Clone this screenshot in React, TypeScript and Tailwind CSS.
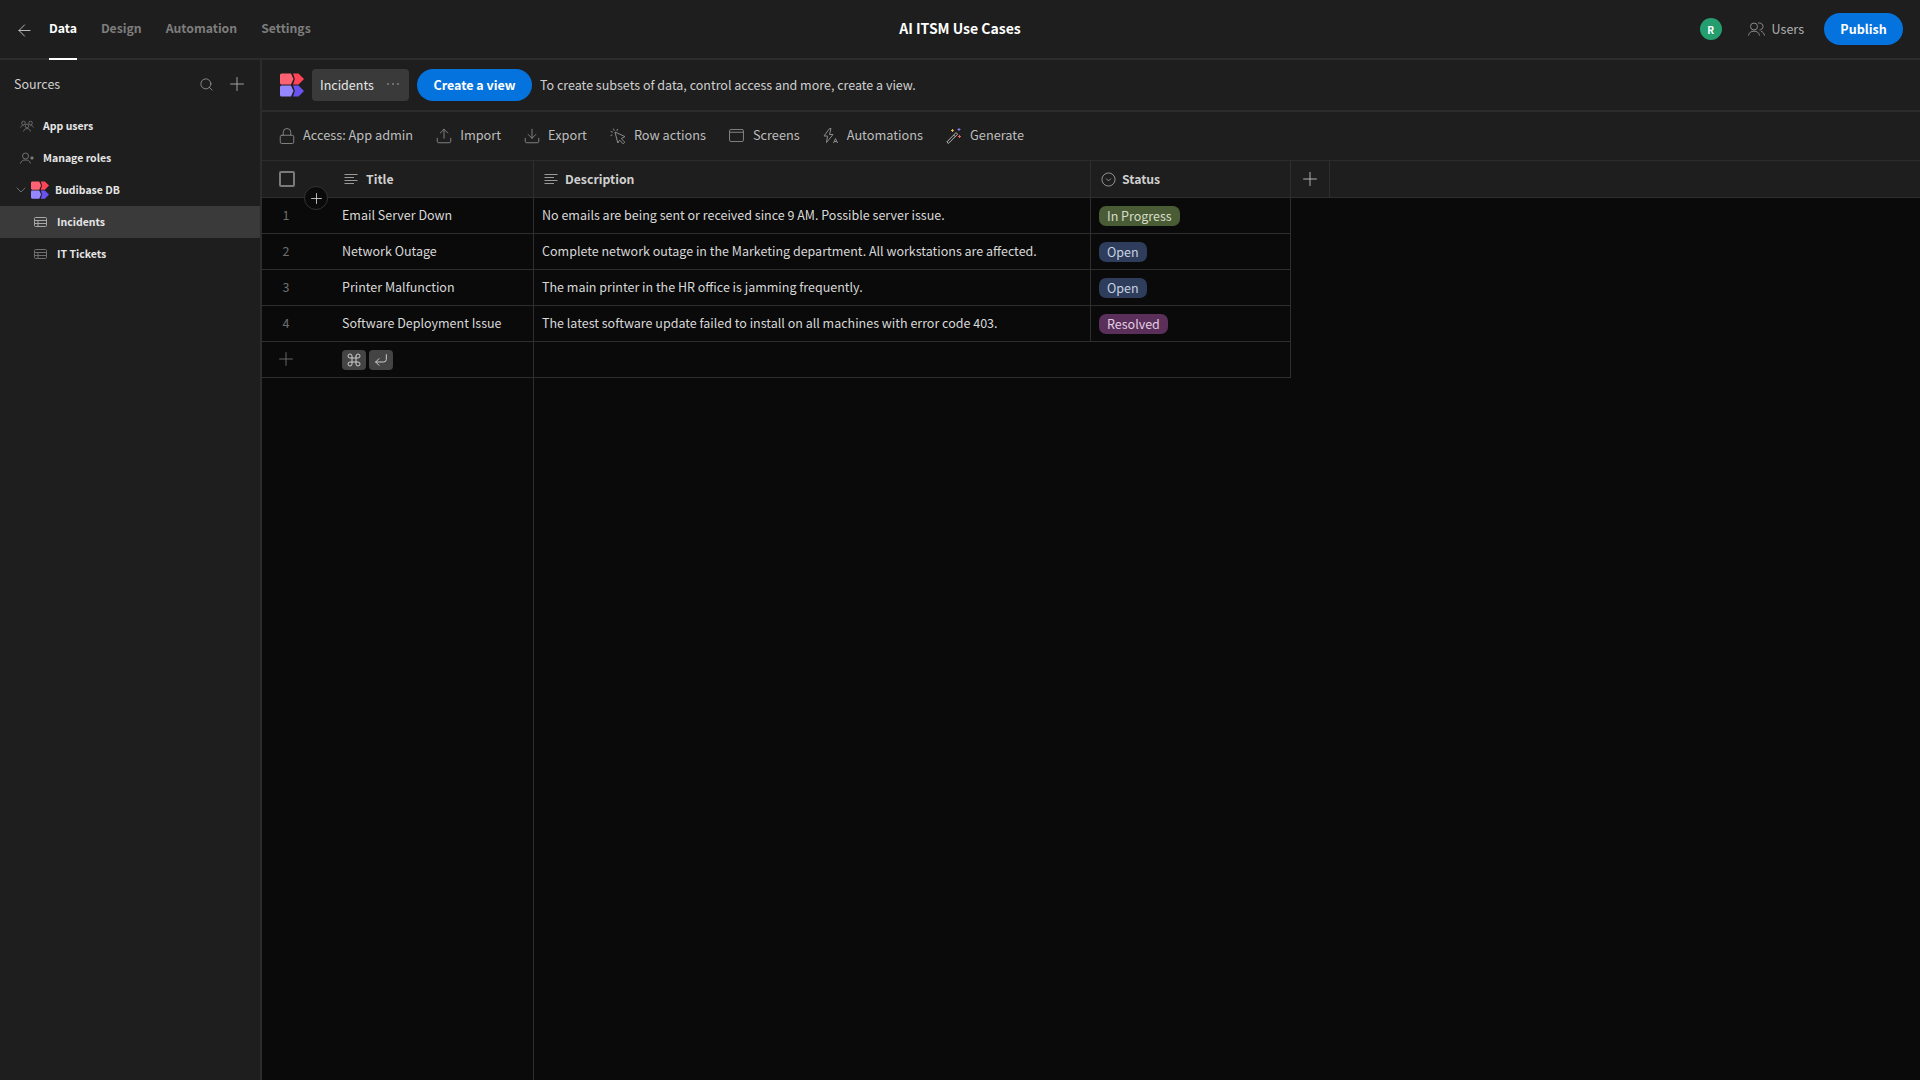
import { ArrowLeft, ChevronDown, Command, CornerDownLeft, Plus, Search, Upload, Download, Lock } from "lucide-react";

const font = "font-['Noto_Sans_CJK_SC','Source_Sans_Pro','Noto_Sans',sans-serif]";

function Logo({ className }: { className: string }) {
	return (
		<svg viewBox="0 0 24 24" className={className}>
			<path d="M0 2 Q0 0.5 1.5 0.5 H11 L13.5 6 L11 11.5 H1.5 Q0 11.5 0 10 Z" fill="#ff6272" />
			<path d="M13 0.5 H18.5 L24 6 L18.5 11.5 H13 L14.8 6 Z" fill="#ff4457" />
			<path d="M0 14 Q0 12.5 1.5 12.5 H11 L13.5 18 L11 23.5 H1.5 Q0 23.5 0 22 Z" fill="#9487ff" />
			<path d="M13 12.5 H18.5 L24 18 L18.5 23.5 H13 L14.8 18 Z" fill="#6a52ef" />
		</svg>
	);
}

function LinesIcon() {
	return (
		<svg viewBox="0 0 14 12" className="w-[14px] h-[12px] shrink-0" stroke="#9a9a9a" strokeWidth="1">
			<path d="M0.5 1.5H13.5M0.5 4.5H10M0.5 7.5H13.5M0.5 10.5H10" />
		</svg>
	);
}

function TableIcon({ color }: { color: string }) {
	return (
		<svg viewBox="0 0 13 10" className="w-[13px] h-[10px] shrink-0" fill="none" stroke={color} strokeWidth="1">
			<rect x="0.5" y="0.5" width="12" height="9" rx="1" />
			<path d="M0.5 3.5H12.5M0.5 6.5H12.5M4 3.5V9.5" />
		</svg>
	);
}

function AppUsersIcon() {
	return (
		<svg viewBox="0 0 14 12" className="w-[14px] h-[12px] shrink-0" fill="none" stroke="#7a7a7a" strokeWidth="0.8">
			<circle cx="3.5" cy="3" r="1.8" />
			<circle cx="10.5" cy="3" r="1.8" />
			<circle cx="7" cy="6" r="1.8" />
			<path d="M0.5 7.5C1 6 2 5.6 3.5 5.6M13.5 7.5C13 6 12 5.6 10.5 5.6M3.5 11.5C4 9.2 5.5 8.6 7 8.6C8.5 8.6 10 9.2 10.5 11.5" />
		</svg>
	);
}

function RolesIcon() {
	return (
		<svg viewBox="0 0 14 12" className="w-[14px] h-[12px] shrink-0" fill="none" stroke="#7a7a7a" strokeWidth="0.9">
			<circle cx="5.5" cy="4" r="3" />
			<path d="M0.5 11.5C1 8.8 3 8 5.5 8C8 8 9.8 8.8 10.4 11.5" />
			<circle cx="12" cy="6" r="1.2" fill="#7a7a7a" />
		</svg>
	);
}

function TopUsersIcon() {
	return (
		<svg viewBox="0 0 17 14" className="w-[17px] h-[14px] shrink-0 mr-[7px]" fill="none" stroke="#8a8a8a" strokeWidth="1">
			<circle cx="6" cy="4.5" r="3.5" />
			<path d="M0.5 13.5C1 10.5 3 9.2 6 9.2C9 9.2 11 10.5 11.5 13.5" />
			<path d="M10 1.2C10.5 1 11 1 11.5 1C13.4 1 15 2.5 15 4.5C15 6.5 13.4 8 11.5 8M13 9.4C15 9.9 16 11.2 16.5 13.5" />
		</svg>
	);
}

function CursorIcon() {
	return (
		<svg viewBox="0 0 16 16" className="w-[16px] h-[16px] shrink-0" fill="none" stroke="#8a8a8a" strokeWidth="1" strokeLinejoin="round">
			<path d="M5 4L15 8.6L11.2 10.6L14.8 14.2L13.2 15.8L9.6 12.2L7.8 15Z" />
			<path d="M3.4 0.6L4.3 2.8M0.6 3.4L2.8 4.3M7.6 1L6.9 2.8M0.6 7.6L2.4 6.9" />
		</svg>
	);
}

function ScreensIcon() {
	return (
		<svg viewBox="0 0 16 14" className="w-[15px] h-[13px] shrink-0" fill="none" stroke="#8a8a8a" strokeWidth="1">
			<rect x="0.5" y="0.5" width="15" height="13" rx="1.5" />
			<path d="M0.5 3.5H15.5" />
		</svg>
	);
}

function AutomationsIcon() {
	return (
		<svg viewBox="0 0 16 16" className="w-[16px] h-[16px] shrink-0" fill="none" stroke="#8a8a8a" strokeWidth="1">
			<path d="M6.5 0.5L1 8H4.5L3.5 14.5L10 6.5H6.5L8 0.5Z" />
			<path d="M10.5 15L12.5 10.5L14.5 15M11.2 13.5H13.8" />
		</svg>
	);
}

function WandIcon() {
	return (
		<svg viewBox="0 0 16 16" className="w-[16px] h-[16px] shrink-0" fill="none">
			<path d="M0.8 14L10 4.6L11.6 6.2L2.4 15.4Z" stroke="#b5b5b5" strokeWidth="1" />
			<path d="M7.6 7L9.2 8.6" stroke="#b5b5b5" strokeWidth="1" />
			<path d="M6.5 1V4M5 2.5H8" stroke="#e0b64a" strokeWidth="1" />
			<path d="M13 0V3M11.5 1.5H14.5" stroke="#7d7df0" strokeWidth="1" />
			<path d="M13.5 7V10M12 8.5H15" stroke="#e8605a" strokeWidth="1" />
		</svg>
	);
}

function StatusIcon() {
	return (
		<svg viewBox="0 0 16 16" className="w-[15px] h-[15px] shrink-0" fill="none" stroke="#9a9a9a" strokeWidth="1">
			<circle cx="8" cy="8" r="7" />
			<path d="M5.5 7L8 9.5L10.5 7" />
		</svg>
	);
}

function ToolbarButton({ icon, label }: { icon: React.ReactNode; label: string }) {
	return (
		<div className="flex items-center gap-[7px] text-[12.75px] text-[#bdbdbd] pb-px">
			<span className="w-[18px] flex items-center justify-center">{icon}</span>
			<span className="pb-px">{label}</span>
		</div>
	);
}

function SideItem({ icon, label, active, pad }: { icon: React.ReactNode; label: string; active?: boolean; pad: string }) {
	return (
		<div className={`flex items-center h-8 text-[10.5px] font-semibold text-[#e6e6e6] ${pad} ${active ? "bg-[#3a3a3a]" : ""}`}>
			{icon}
			<span>{label}</span>
		</div>
	);
}

const rows = [
	{ title: "Email Server Down", desc: "No emails are being sent or received since 9 AM. Possible server issue.", status: "In Progress", pill: "bg-[#4a5c36] text-[#d6dcc6]" },
	{ title: "Network Outage", desc: "Complete network outage in the Marketing department. All workstations are affected.", status: "Open", pill: "bg-[#2e3d5c] text-[#c9d2e2]" },
	{ title: "Printer Malfunction", desc: "The main printer in the HR office is jamming frequently.", status: "Open", pill: "bg-[#2e3d5c] text-[#c9d2e2]" },
	{ title: "Software Deployment Issue", desc: "The latest software update failed to install on all machines with error code 403.", status: "Resolved", pill: "bg-[#5a2f5a] text-[#e2cde2]" },
];

export default function App() {
	return (
		<div className={`w-[1920px] h-[1080px] flex flex-col overflow-hidden bg-[#1e1e1e] text-[#e0e0e0] ${font}`}>
			{/* top nav */}
			<div className="h-[60px] shrink-0 flex items-center border-b-2 border-[#2c2c2c] relative">
				<div className="flex-1 flex items-center h-full pl-[15px]">
					<ArrowLeft className="w-[19px] h-[19px] mr-[15px] mt-[2px] text-[#bbbbbb]" strokeWidth={1.25} />
					<div className="flex gap-6 h-full text-[12.25px] font-semibold text-[#7d7d7d]">
						<div className="relative h-full flex items-center text-white pb-[2px]">
							Data
							<div className="absolute -bottom-[2px] left-0 right-0 h-[2px] bg-white" />
						</div>
						<div className="flex items-center pb-[2px]">Design</div>
						<div className="flex items-center pb-[2px]">Automation</div>
						<div className="flex items-center pb-[2px]">Settings</div>
					</div>
				</div>
				<div className="text-[14px] font-semibold text-white pb-[2px] pl-[2px]">AI ITSM Use Cases</div>
				<div className="flex-1 flex items-center justify-end pr-[17px]">
					<div className="w-[22px] h-[22px] rounded-full bg-[#259e6f] text-white text-[10px] font-bold flex items-center justify-center mr-[26px]">R</div>
					<TopUsersIcon />
					<div className="text-[12.5px] text-[#b0b0b0] mr-[20px]">Users</div>
					<div className="w-[79px] h-8 rounded-full bg-[#0573de] text-white text-[12.5px] font-semibold flex items-center justify-center">Publish</div>
				</div>
			</div>

			<div className="flex flex-1 min-h-0">
				{/* sidebar */}
				<div className="w-[262px] shrink-0 border-r-2 border-[#2c2c2c]">
					<div className="h-[50px] flex items-center pl-[14px] pr-[12px] pb-[2px] text-[12.5px] text-[#d0d0d0]">
						<span className="flex-1">Sources</span>
						<Search className="w-[15px] h-[15px] text-[#a0a0a0] mr-[12px]" strokeWidth={1.25} />
						<Plus className="w-[22px] h-[22px] text-[#a0a0a0]" strokeWidth={1.1} />
					</div>
					<SideItem pad="pl-[20px]" label="App users" icon={<span className="mr-[9px]"><AppUsersIcon /></span>} />
					<SideItem pad="pl-[20px]" label="Manage roles" icon={<span className="mr-[9px]"><RolesIcon /></span>} />
					<SideItem
						pad="pl-[13px]"
						label="Budibase DB"
						icon={
							<>
								<ChevronDown className="w-[16px] h-[16px] text-[#8a8a8a] mr-[2px]" strokeWidth={1.1} />
								<Logo className="w-[18px] h-[18px] mr-[6px]" />
							</>
						}
					/>
					<SideItem active pad="pl-[34px]" label="Incidents" icon={<span className="mr-[10px]"><TableIcon color="#a8a8a8" /></span>} />
					<SideItem pad="pl-[34px]" label="IT Tickets" icon={<span className="mr-[10px]"><TableIcon color="#6f6f6f" /></span>} />
				</div>

				{/* main */}
				<div className="flex-1 min-w-0 flex flex-col">
					<div className="h-[52px] shrink-0 flex items-center pl-[18px] border-b-2 border-[#2c2c2c]">
						<Logo className="w-[24px] h-[24px] mr-[8px]" />
						<div className="w-[97px] h-8 rounded bg-[#3a3a3a] flex items-center pl-2 text-[12.5px] text-[#e6e6e6] mr-2">
							<span className="flex-1">Incidents</span>
							<div className="flex gap-[3px] mr-[10px] mb-[2px]">
								<div className="w-[2px] h-[2px] rounded-full bg-[#808080]" />
								<div className="w-[2px] h-[2px] rounded-full bg-[#808080]" />
								<div className="w-[2px] h-[2px] rounded-full bg-[#808080]" />
							</div>
						</div>
						<div className="w-[115px] h-8 rounded-full bg-[#0573de] text-white text-[12.5px] font-semibold flex items-center justify-center mr-2">Create a view</div>
						<span className="text-[12.5px] text-[#cfcfcf]">To create subsets of data, control access and more, create a view.</span>
					</div>
					<div className="h-[49px] shrink-0 flex items-center gap-[22px] pl-[16px] border-b border-[#2c2c2c]">
						<ToolbarButton label="Access: App admin" icon={<Lock className="w-[18px] h-[18px] text-[#8a8a8a]" strokeWidth={1.2} />} />
						<ToolbarButton label="Import" icon={<Upload className="w-[18px] h-[18px] text-[#8a8a8a]" strokeWidth={1.2} />} />
						<ToolbarButton label="Export" icon={<Download className="w-[18px] h-[18px] text-[#8a8a8a]" strokeWidth={1.2} />} />
						<ToolbarButton label="Row actions" icon={<CursorIcon />} />
						<ToolbarButton label="Screens" icon={<ScreensIcon />} />
						<ToolbarButton label="Automations" icon={<AutomationsIcon />} />
						<ToolbarButton label="Generate" icon={<WandIcon />} />
					</div>

					{/* grid */}
					<div className="flex-1 min-h-0 flex flex-col relative">
						<div className="h-[37px] shrink-0 flex border-b border-[#2e2e2e] text-[12.25px] font-semibold text-[#d0d0d0]">
							<div className="w-[272px] flex items-center border-r border-[#2e2e2e]">
								<div className="w-[16px] h-[16px] ml-[17px] border-2 border-[#7a7a7a] rounded-[2px] mr-[49px]" />
								<LinesIcon />
								<span className="ml-[8px]">Title</span>
							</div>
							<div className="w-[557px] flex items-center pl-[10px] border-r border-[#2e2e2e]">
								<LinesIcon />
								<span className="ml-[7px]">Description</span>
							</div>
							<div className="w-[200px] flex items-center pl-[10px] border-r border-[#2e2e2e]">
								<StatusIcon />
								<span className="ml-[6px]">Status</span>
							</div>
							<div className="w-[39px] flex items-center justify-center border-r border-[#2e2e2e]">
								<Plus className="w-[22px] h-[22px] text-[#b0b0b0]" strokeWidth={1.1} />
							</div>
						</div>
						<div className="flex-1 min-h-0 flex bg-[#0a0a0a] text-[12.5px] text-[#d8d8d8]">
							<div className="w-[272px] shrink-0 border-r border-[#2e2e2e]">
								{rows.map((r, i) => (
									<div key={r.title} className="h-[36px] flex items-center border-b border-[#2e2e2e]">
										<span className="w-[48px] text-center text-[#6e6e6e]">{i + 1}</span>
										<span className="ml-[32px]">{r.title}</span>
									</div>
								))}
								<div className="h-[36px] flex items-center border-b border-[#2e2e2e]">
									<Plus className="w-[22px] h-[22px] ml-[13px] mr-[45px] mb-[2px] text-[#6e6e6e]" strokeWidth={1} />
									<div className="w-[24px] h-[20px] rounded bg-[#444444] flex items-center justify-center mr-[3px]">
										<Command className="w-[16px] h-[16px] text-[#cccccc]" strokeWidth={1.5} />
									</div>
									<div className="w-[24px] h-[20px] rounded bg-[#444444] flex items-center justify-center">
										<CornerDownLeft className="w-[16px] h-[16px] text-[#cccccc]" strokeWidth={1.5} />
									</div>
								</div>
							</div>
							<div className="w-[757px] shrink-0 self-start border-r border-[#2e2e2e]">
								{rows.map((r) => (
									<div key={r.title} className="h-[36px] flex border-b border-[#2e2e2e]">
										<div className="w-[557px] border-r border-[#2e2e2e] flex items-center pl-[8px]">{r.desc}</div>
										<div className="flex-1 flex items-center pl-[8px] pt-[1px]">
											<span className={`h-[20px] rounded-[7px] px-2 flex items-center ${r.pill}`}>{r.status}</span>
										</div>
									</div>
								))}
								<div className="h-[36px] border-b border-[#2e2e2e]" />
							</div>
						</div>
						{/* insert row button */}
						<div className="absolute left-[42px] top-[25px] w-[24px] h-[24px] rounded-full bg-[#0a0a0a] border border-[#333333] flex items-center justify-center">
							<Plus className="w-[17px] h-[17px] text-[#cccccc]" strokeWidth={1.25} />
						</div>
					</div>
				</div>
			</div>
		</div>
	);
}
